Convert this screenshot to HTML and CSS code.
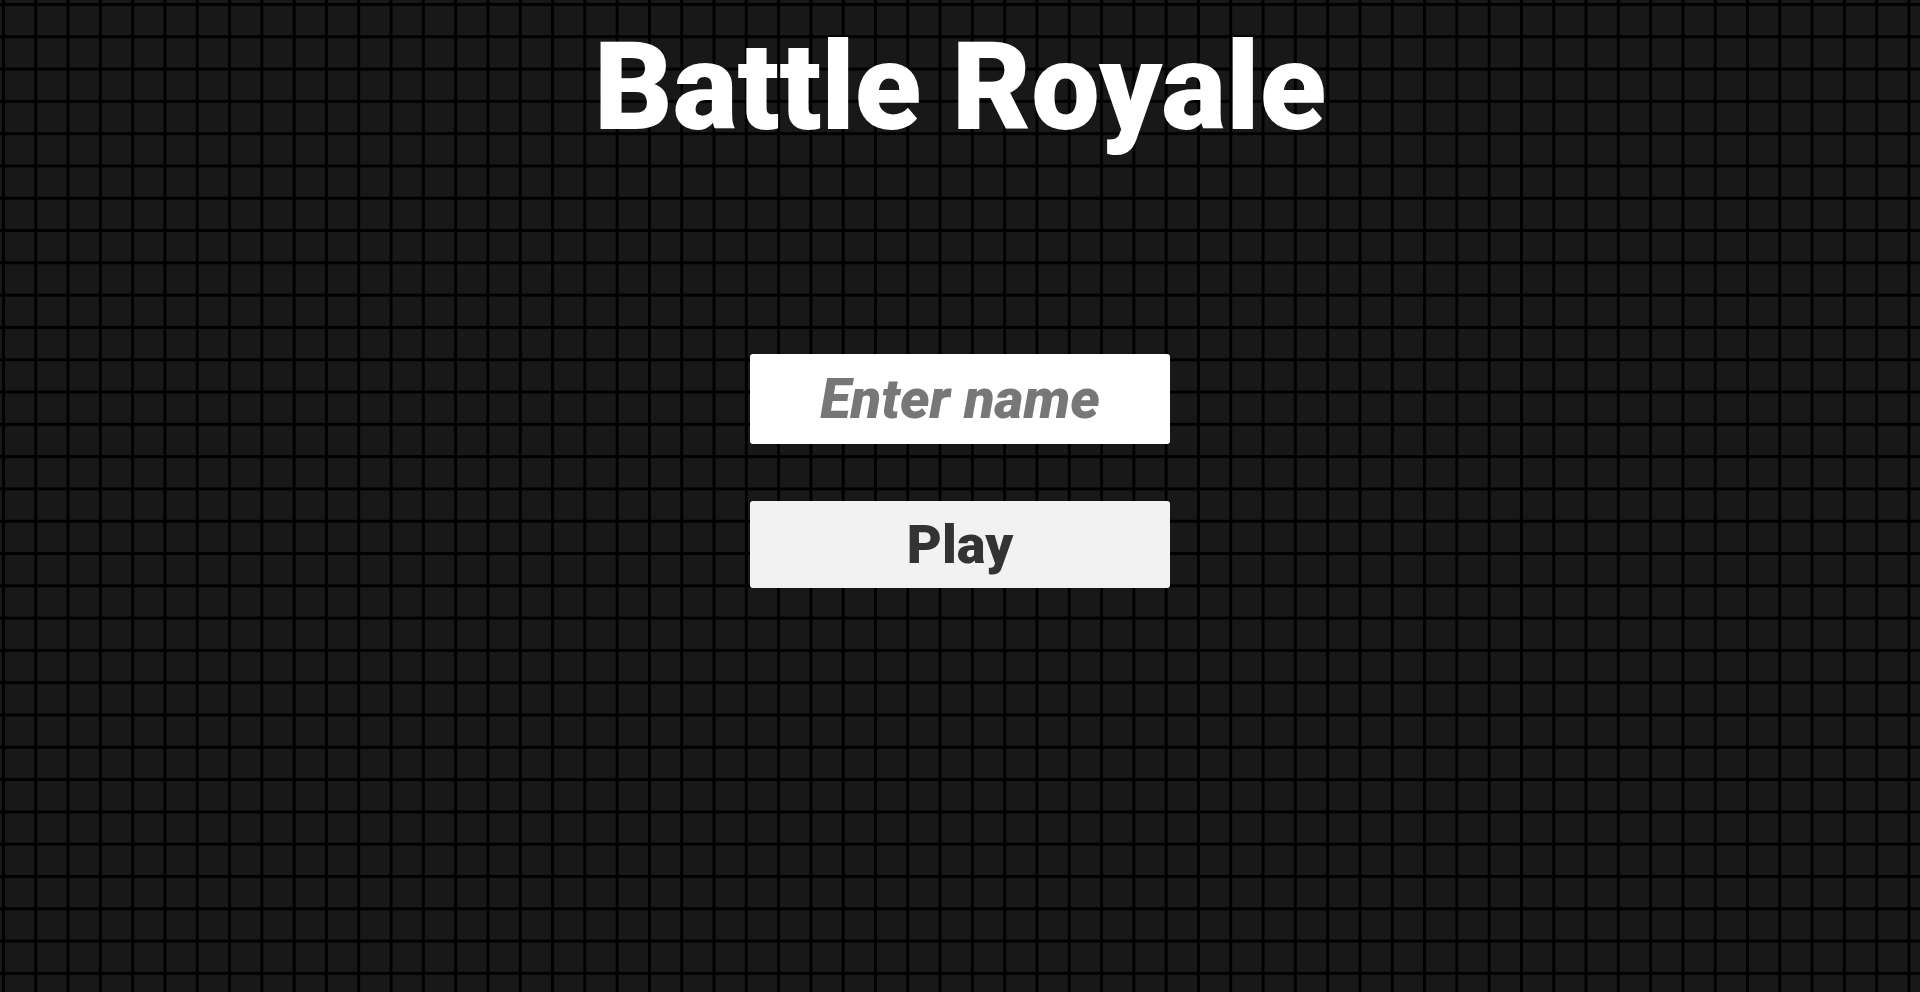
FILE: index.html
```html
<!DOCTYPE html>
<html lang="en">
<head>
    <meta charset="UTF-8">
    <meta name="viewport" content="width=device-width, initial-scale=1.0">
    <title>Battle Royale</title>
    <link rel="stylesheet" href="styles.css">
</head>
<body>
    <div class="menu">
        <h1 class="title">Battle Royale</h1>

        <form class="join" onsubmit="return false">
            <input class="name-input" type="text" placeholder="Enter name" maxlength="16">
            <button class="play-btn" type="submit">Play</button>
        </form>
    </div>
</body>
</html>
```

FILE: styles.css
```css
html, body {
    margin: 0;
    height: 100%;
}
body {
    font-family: Roboto, "Liberation Sans", sans-serif;
    background-color: #181818;
    /* map grid behind the menu */
    background-image:
        linear-gradient(to right, #000 3px, transparent 3px),
        linear-gradient(to bottom, #000 3px, transparent 3px);
    background-size: 32.3px 32.3px;
    background-position: 2px 3px;
    overflow: hidden;
}
.menu {
    display: flex;
    flex-direction: column;
    align-items: center;
}
.title {
    margin: 16px 0 0;
    font-size: 122px;
    font-weight: 900;
    line-height: normal;
    color: #fff;
}
.join {
    display: flex;
    flex-direction: column;
    gap: 57px;
    margin-top: 195px;
}
.name-input,
.play-btn {
    box-sizing: border-box;
    width: 420px;
    border: none;
    border-radius: 3px;
    font-family: Roboto, "Liberation Sans", sans-serif;
    font-weight: 900;
    text-align: center;
    outline: none;
    padding: 0;
}
.name-input {
    height: 90px;
    background: #fff;
    color: #222;
    font-size: 56px;
    font-style: italic;
}
.name-input::placeholder {
    color: #777;
}
.play-btn {
    height: 87px;
    background: #f2f2f2;
    color: #333;
    font-size: 54px;
    cursor: pointer;
}
.play-btn:hover { background: #e6e6e6; }
```
